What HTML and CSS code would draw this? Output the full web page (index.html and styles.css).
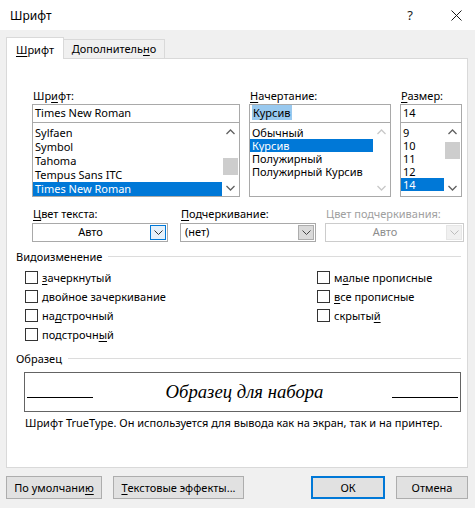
FILE: index.html
```html
<!DOCTYPE html>
<html lang="ru">
<head>
<meta charset="utf-8">
<title>Шрифт</title>
<link rel="stylesheet" href="styles.css">
</head>
<body>
<div class="dialog">
  <div class="titlebar">
    <span class="title">Шрифт</span>
    <span class="help">?</span>
    <span class="close"><svg width="11" height="11" viewBox="0 0 11 11"><path d="M0.5 0.5 L10.5 10.5 M10.5 0.5 L0.5 10.5" stroke="#1a1a1a" stroke-width="1" fill="none"/></svg></span>
  </div>
  <div class="content">
    <div class="tabs">
      <div class="tab active"><u>Ш</u>рифт</div>
      <div class="tab">Дополнитель<u>н</u>о</div>
    </div>
    <div class="panel">
      <div class="font-row">
        <div class="col col-font">
          <div class="lbl">Шр<u>и</u>фт:</div>
          <div class="input">Times New Roman</div>
          <div class="list">
            <div class="items r14">
              <div class="item">Sylfaen</div>
              <div class="item">Symbol</div>
              <div class="item">Tahoma</div>
              <div class="item">Tempus Sans ITC</div>
              <div class="item sel">Times New Roman</div>
            </div>
            <div class="scroll">
              <div class="arrow"><svg width="9" height="6" viewBox="0 0 9 6"><path d="M0.5 5 L4.5 1 L8.5 5" stroke="#606060" stroke-width="1.3" fill="none"/></svg></div>
              <div class="track"><div class="thumb t-font"></div></div>
              <div class="arrow"><svg width="9" height="6" viewBox="0 0 9 6"><path d="M0.5 1 L4.5 5 L8.5 1" stroke="#606060" stroke-width="1.3" fill="none"/></svg></div>
            </div>
          </div>
        </div>
        <div class="col col-style">
          <div class="lbl"><u>Н</u>ачертание:</div>
          <div class="input"><span class="hl">Курсив</span></div>
          <div class="list">
            <div class="items r13">
              <div class="item">Обычный</div>
              <div class="item sel">Курсив</div>
              <div class="item">Полужирный</div>
              <div class="item">Полужирный Курсив</div>
            </div>
            <div class="scroll">
              <div class="arrow"><svg width="9" height="6" viewBox="0 0 9 6"><path d="M0.5 5 L4.5 1 L8.5 5" stroke="#c8c8c8" stroke-width="1.3" fill="none"/></svg></div>
              <div class="track"></div>
              <div class="arrow"><svg width="9" height="6" viewBox="0 0 9 6"><path d="M0.5 1 L4.5 5 L8.5 1" stroke="#c8c8c8" stroke-width="1.3" fill="none"/></svg></div>
            </div>
          </div>
        </div>
        <div class="col col-size">
          <div class="lbl"><u>Р</u>азмер:</div>
          <div class="input">14</div>
          <div class="list">
            <div class="items r13">
              <div class="item">9</div>
              <div class="item">10</div>
              <div class="item">11</div>
              <div class="item">12</div>
              <div class="item sel">14</div>
            </div>
            <div class="scroll">
              <div class="arrow"><svg width="9" height="6" viewBox="0 0 9 6"><path d="M0.5 5 L4.5 1 L8.5 5" stroke="#606060" stroke-width="1.3" fill="none"/></svg></div>
              <div class="track"><div class="thumb t-size"></div></div>
              <div class="arrow"><svg width="9" height="6" viewBox="0 0 9 6"><path d="M0.5 1 L4.5 5 L8.5 1" stroke="#606060" stroke-width="1.3" fill="none"/></svg></div>
            </div>
          </div>
        </div>
      </div>

      <div class="combo-row">
        <div class="ccol">
          <div class="lbl"><u>Ц</u>вет текста:</div>
          <div class="combo">
            <span class="cval center">Авто</span>
            <span class="cbtn focus"><svg width="9" height="5" viewBox="0 0 9 5"><path d="M0.5 0.5 L4.5 4.5 L8.5 0.5" stroke="#333" stroke-width="1" fill="none"/></svg></span>
          </div>
        </div>
        <div class="ccol">
          <div class="lbl"><u>П</u>одчеркивание:</div>
          <div class="combo">
            <span class="cval">(нет)</span>
            <span class="cbtn"><svg width="9" height="5" viewBox="0 0 9 5"><path d="M0.5 0.5 L4.5 4.5 L8.5 0.5" stroke="#444" stroke-width="1" fill="none"/></svg></span>
          </div>
        </div>
        <div class="ccol">
          <div class="lbl disabled">Цвет подчеркивания:</div>
          <div class="combo dis">
            <span class="cval center">Авто</span>
            <span class="cbtn"><svg width="9" height="5" viewBox="0 0 9 5"><path d="M0.5 0.5 L4.5 4.5 L8.5 0.5" stroke="#bdbdbd" stroke-width="1" fill="none"/></svg></span>
          </div>
        </div>
      </div>

      <div class="group-head"><span>Видоизменение</span><span class="rule"></span></div>
      <div class="checks">
        <div class="ccolumn left">
          <div class="chk"><span class="box"></span><span><u>з</u>ачеркнутый</span></div>
          <div class="chk"><span class="box"></span><span>двойное зачеркивание</span></div>
          <div class="chk"><span class="box"></span><span>на<u>д</u>строчный</span></div>
          <div class="chk"><span class="box"></span><span>подстрочн<u>ы</u>й</span></div>
        </div>
        <div class="ccolumn">
          <div class="chk"><span class="box"></span><span>м<u>а</u>лые прописные</span></div>
          <div class="chk"><span class="box"></span><span><u>в</u>се прописные</span></div>
          <div class="chk"><span class="box"></span><span>скрыты<u>й</u></span></div>
        </div>
      </div>

      <div class="group-head sample-head"><span>Образец</span><span class="rule"></span></div>
      <div class="sample">
        <span class="sline"></span>
        <span class="stext">Образец для набора</span>
        <span class="sline"></span>
      </div>
      <div class="desc">Шрифт TrueType. Он используется для вывода как на экран, так и на принтер.</div>
    </div>

    <div class="buttons">
      <div class="btn b-default">По умолчани<u>ю</u></div>
      <div class="btn b-effects"><u>Т</u>екстовые эффекты...</div>
      <div class="spacer"></div>
      <div class="btn b-ok">ОК</div>
      <div class="btn b-cancel">Отмена</div>
    </div>
  </div>
</div>
</body>
</html>
```

FILE: styles.css
```css
* { box-sizing: border-box; }
html, body { margin: 0; padding: 0; }
body {
  width: 475px;
  height: 508px;
  background: #f0f0f0;
  font-family: "Noto Sans", "Open Sans", sans-serif;
  font-size: 11px;
  color: #000;
  overflow: hidden;
}
u { text-decoration: underline; text-underline-offset: 2px; }

.dialog { width: 475px; height: 508px; display: flex; flex-direction: column; }

.titlebar {
  height: 30px;
  background: #fff;
  display: flex;
  align-items: center;
  padding-left: 10px;
}
.title { font-size: 12px; flex: 1; }
.help { width: 12px; text-align: center; font-size: 13px; color: #1a1a1a; margin-right: 35px; }
.close { width: 11px; height: 11px; display: flex; margin-right: 13px; }

.content { flex: 1; padding-top: 7px; }

.tabs {
  display: flex;
  align-items: flex-end;
  height: 21px;
  margin-left: 6px;
  position: relative;
  z-index: 1;
}
.tab {
  border: 1px solid #d9d9d9;
  border-bottom: none;
  display: flex;
  align-items: center;
  justify-content: center;
}
.tab.active {
  width: 58px;
  height: 22px;
  margin-bottom: -1px;
  background: #fff;
  padding-top: 1px;
}
.tab:not(.active) {
  width: 101px;
  height: 19px;
  border-left: none;
  background: #f0f0f0;
  padding-bottom: 1px;
}

.panel {
  margin-left: 6px;
  width: 462px;
  height: 410px;
  background: #fff;
  border: 1px solid #d9d9d9;
  padding: 29px 5px 0 9px;
}

.font-row { display: flex; margin-left: 16px; }
.col { display: flex; flex-direction: column; }
.col-font { width: 208px; }
.col-style { width: 142px; margin-left: 9px; }
.col-size { width: 62px; margin-left: 9px; }

.lbl { height: 16px; line-height: 15px; padding-left: 1px; white-space: nowrap; }
.lbl.disabled { color: #a0a0a0; }

.input {
  height: 19px;
  border: 1px solid #a9a9a9;
  line-height: 16px;
  padding-left: 2px;
  white-space: nowrap;
}
.hl { background: #99c9ef; padding: 0 1px; }

.list {
  height: 75px;
  margin-top: -1px;
  border: 1px solid #a9a9a9;
  display: flex;
  overflow: hidden;
}
.items { flex: 1; padding-top: 3px; min-width: 0; }
.item { padding-left: 2px; white-space: nowrap; }
.r14 .item { height: 14px; line-height: 14px; }
.r13 .item { height: 13px; line-height: 13px; }
.item.sel { background: #0078d7; color: #fff; }

.scroll {
  width: 17px;
  display: flex;
  flex-direction: column;
  background: #fff;
}
.arrow { height: 17px; display: flex; align-items: center; justify-content: center; }
.track { flex: 1; position: relative; }
.thumb { position: absolute; left: 1px; right: 1px; height: 17px; background: #cdcdcd; }
.t-font { top: 18px; }
.t-size { top: 2px; }

.combo-row {
  display: grid;
  grid-template-columns: 136px 136px 136px;
  column-gap: 12px;
  margin-left: 16px;
  margin-top: 9px;
}
.ccol:nth-child(3) { margin-left: -3px; }
.combo {
  margin-top: 1px;
  height: 19px;
  border: 1px solid #a9a9a9;
  display: flex;
  align-items: stretch;
  background: #fff;
}
.cval { flex: 1; line-height: 16px; padding-left: 4px; white-space: nowrap; }
.cval.center { text-align: center; padding-left: 0; padding-right: 2px; }
.cbtn {
  width: 16px;
  margin: 1px 1px 1px 0;
  border: 1px solid #adadad;
  background: #dadada;
  display: flex;
  align-items: center;
  justify-content: center;
}
.cbtn.focus { border-color: #0078d7; background: #e5f1fb; }
.combo.dis { border-color: #cccccc; }
.combo.dis .cval { color: #8d8d8d; }
.combo.dis .cbtn { border-color: #e6e6e6; background: #f0f0f0; }

.group-head {
  display: flex;
  align-items: center;
  margin-top: 7px;
  height: 15px;
  line-height: 15px;
}
.group-head .rule { flex: 1; height: 1px; background: #dcdcdc; margin-left: 6px; margin-right: 1px; }

.checks { display: flex; margin-top: 4px; margin-left: 9px; }
.ccolumn { display: flex; flex-direction: column; }
.ccolumn.left { width: 292px; }
.chk { height: 19px; display: flex; align-items: center; white-space: nowrap; }
.box {
  width: 13px;
  height: 13px;
  border: 1px solid #333;
  background: #fff;
  margin-right: 4px;
  flex: none;
}

.sample-head { margin-top: 7px; }
.sample {
  margin-top: 6px;
  margin-left: 8px;
  width: 437px;
  height: 40px;
  border: 1px solid #646464;
  display: flex;
  align-items: center;
  padding: 0 2px;
}
.sline { width: 66px; height: 1px; background: #000; margin-top: 11px; flex: none; }
.stext {
  flex: 1;
  text-align: center;
  font-family: "Liberation Serif", "Times New Roman", serif;
  font-style: italic;
  font-size: 18.7px;
  margin-left: 4px;
}
.desc { margin-top: 3px; margin-left: 9px; height: 16px; line-height: 16px; white-space: nowrap; }

.buttons {
  display: flex;
  margin-top: 8px;
  margin-left: 6px;
  height: 23px;
}
.btn {
  height: 23px;
  border: 1px solid #adadad;
  background: #e1e1e1;
  display: flex;
  align-items: center;
  justify-content: center;
  white-space: nowrap;
}
.b-default { width: 96px; }
.b-effects { width: 131px; margin-left: 11px; }
.spacer { flex: 1; }
.b-ok { width: 74px; border: 2px solid #0078d7; }
.b-cancel { width: 72px; margin-left: 11px; margin-right: 7px; }
```
